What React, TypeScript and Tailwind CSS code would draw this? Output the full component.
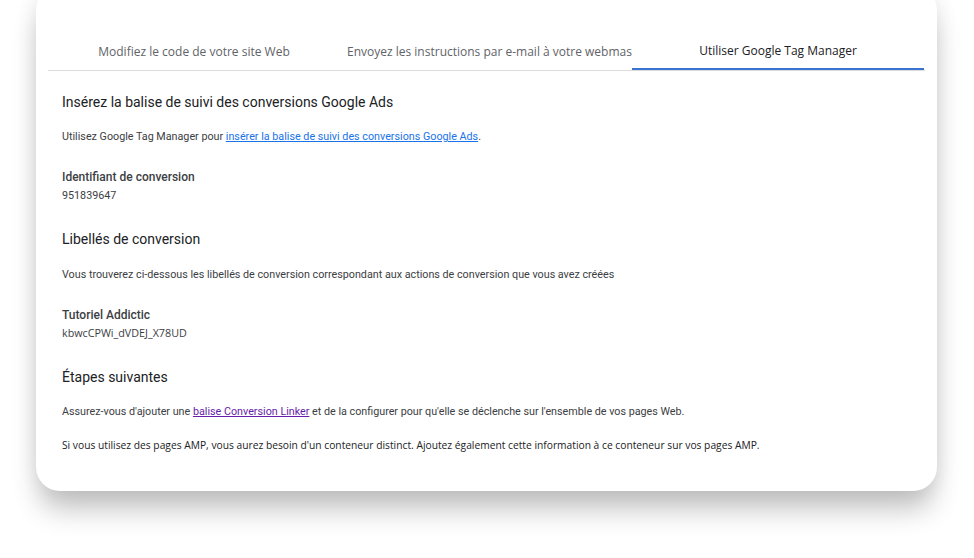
import React from "react";

const body = "font-['Roboto',_'Liberation_Sans',_sans-serif] text-[10.75px] text-[#3c4043] h-[16px] leading-[16px]";
const head = "font-['Roboto',_'Liberation_Sans',_sans-serif] text-[14px] text-[#202124] h-[20px] leading-[20px]";
const label = "font-['Roboto',_'Liberation_Sans',_sans-serif] text-[12px] font-medium text-[#3c4043] h-[16px] leading-[16px]";
const wide = "font-['Open_Sans',_'Liberation_Sans',_sans-serif] h-[16px] leading-[16px]";

export default function App() {
  return (
    <div className="w-[974px] h-[558px] bg-white overflow-hidden">
      <div className="ml-[36px] -mt-[14px] w-[901px] h-[505px] bg-white rounded-[24px] shadow-[0_22px_28px_-4px_rgba(0,0,0,0.24),0_0_22px_rgba(0,0,0,0.07)] pt-[44px] px-[12px]">
        <div className="flex border-b border-[#dadce0] text-[12px] font-['Open_Sans',_'Liberation_Sans',_sans-serif]">
          <div className="w-[292px] h-[40px] flex items-center justify-center px-[7px] pt-[3px] text-[#5f6368] whitespace-nowrap overflow-hidden">
            Modifiez le code de votre site Web
          </div>
          <div className="w-[292px] h-[40px] flex items-center px-[7px] pt-[3px] text-[#5f6368] whitespace-nowrap overflow-hidden">
            Envoyez les instructions par e-mail à votre webmaster
          </div>
          <div className="w-[292px] h-[40px] flex items-center justify-center px-[7px] pt-[3px] text-[#202124] whitespace-nowrap overflow-hidden border-b-2 border-[#3b73d1] -mb-px">
            Utiliser Google Tag Manager
          </div>
        </div>
        <div className="px-[14px] flex flex-col">
          <div className={`mt-[21px] ${head}`}>Insérez la balise de suivi des conversions Google Ads</div>
          <div className={`mt-[17px] ${body}`}>
            Utilisez Google Tag Manager pour{" "}
            <a className="text-[#1a73e8] underline">insérer la balise de suivi des conversions Google Ads</a>.
          </div>
          <div className={`mt-[24px] ${label}`}>Identifiant de conversion</div>
          <div className={`mt-[3px] ${body}`}>951839647</div>
          <div className={`mt-[25px] ${head}`}>Libellés de conversion</div>
          <div className={`mt-[18px] ${body}`}>
            Vous trouverez ci-dessous les libellés de conversion correspondant aux actions de conversion que vous avez créées
          </div>
          <div className={`mt-[24px] ${label}`}>Tutoriel Addictic</div>
          <div className={`mt-[2px] text-[10.75px] text-[#3c4043] ${wide}`}>kbwcCPWi_dVDEJ_X78UD</div>
          <div className={`mt-[26px] ${head}`}>Étapes suivantes</div>
          <div className={`mt-[17px] ${body}`}>
            Assurez-vous d'ajouter une{" "}
            <a className="text-[#681da8] underline">balise Conversion Linker</a> et de la configurer pour qu'elle se déclenche sur l'ensemble de vos pages Web.
          </div>
          <div className={`mt-[17px] text-[10.25px] text-[#202124] ${wide}`}>
            Si vous utilisez des pages AMP, vous aurez besoin d'un conteneur distinct. Ajoutez également cette information à ce conteneur sur vos pages AMP.
          </div>
        </div>
      </div>
    </div>
  );
}
